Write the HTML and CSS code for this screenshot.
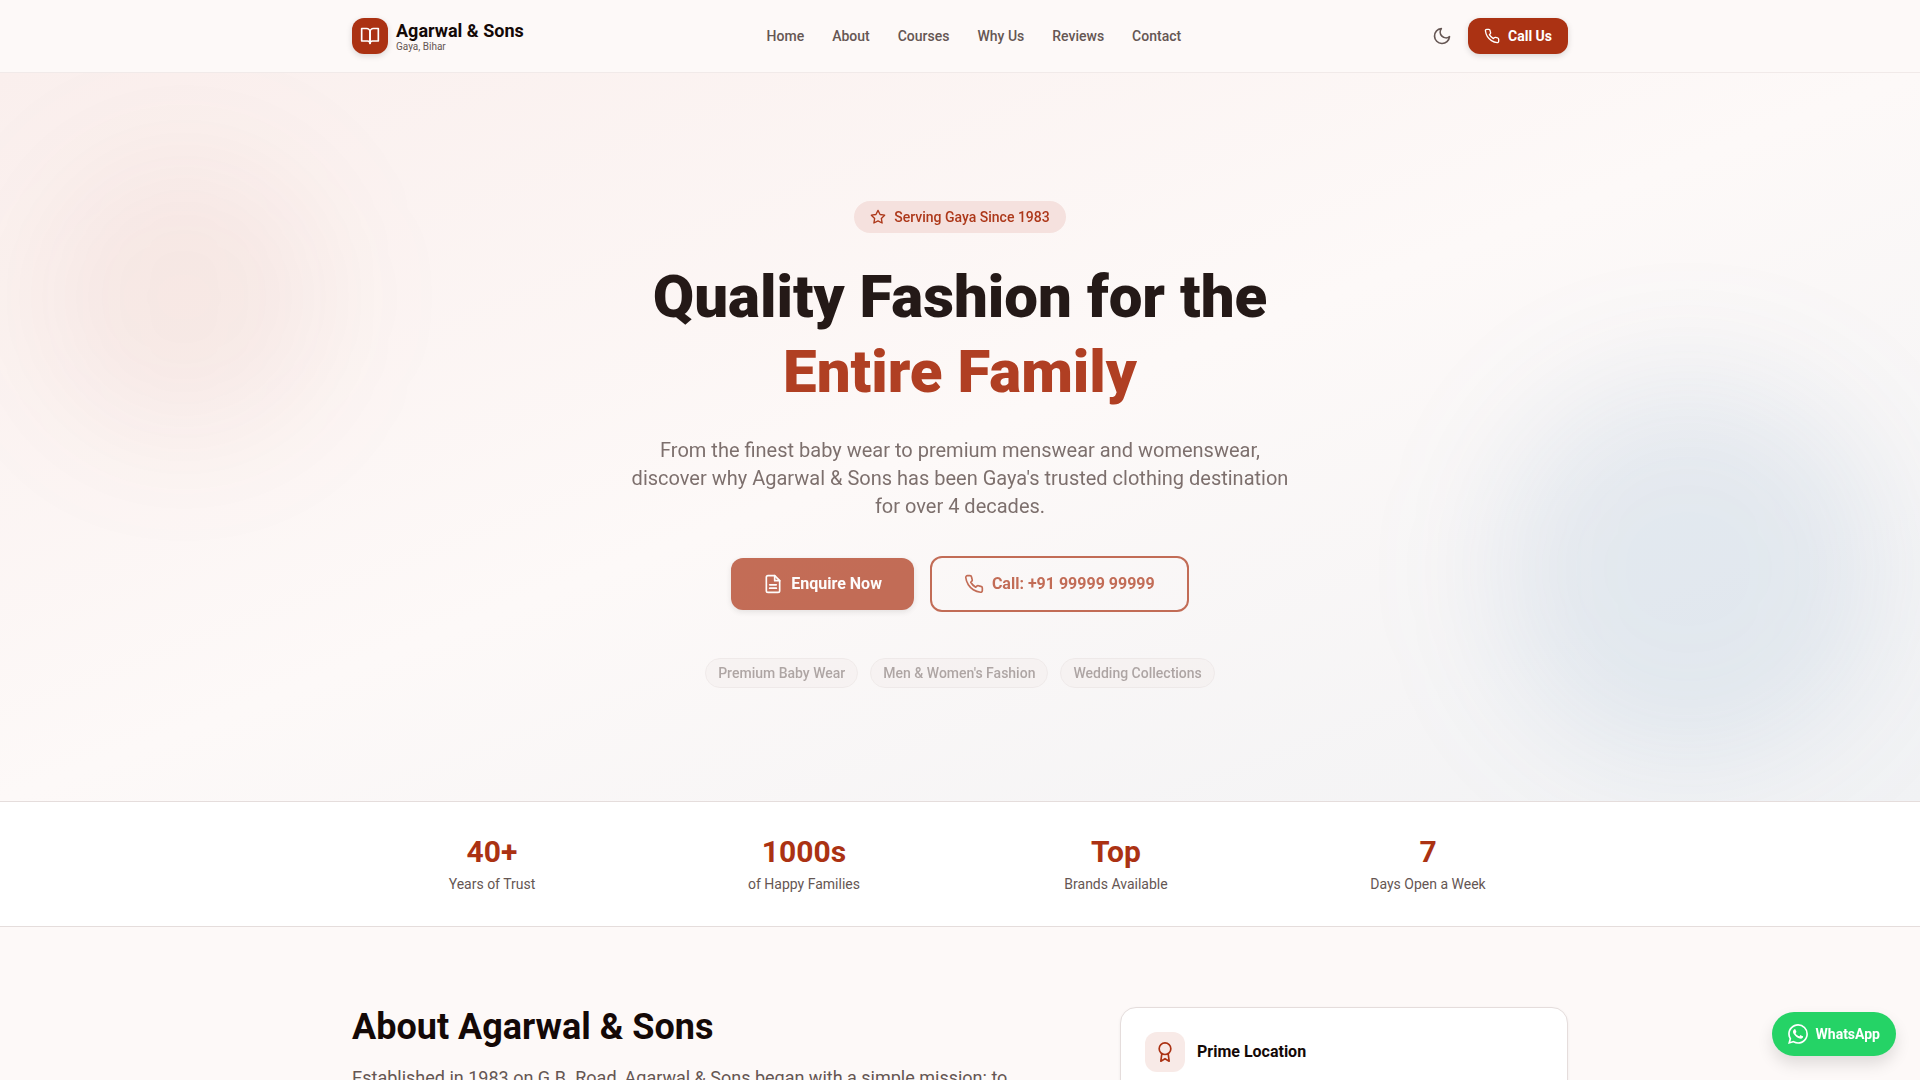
FILE: index.html
```html
<!DOCTYPE html>
<html lang="en">
<head>
    <meta charset="UTF-8">
    <meta name="viewport" content="width=device-width, initial-scale=1.0">
    <title>Agarwal &amp; Sons</title>
    <link rel="stylesheet" href="styles.css">
</head>
<body>
    <header class="header">
        <div class="container header-inner">
            <a href="#" class="brand">
                <span class="brand-logo">
                    <svg class="icon" width="20" height="20" viewBox="0 0 24 24"><path d="M2 3h6a4 4 0 0 1 4 4v14a3 3 0 0 0-3-3H2z"/><path d="M22 3h-6a4 4 0 0 0-4 4v14a3 3 0 0 1 3-3h7z"/></svg>
                </span>
                <span class="brand-text">
                    <span class="brand-name">Agarwal &amp; Sons</span>
                    <span class="brand-place">Gaya, Bihar</span>
                </span>
            </a>
            <nav class="nav">
                <a href="#home">Home</a>
                <a href="#about">About</a>
                <a href="#courses">Courses</a>
                <a href="#why-us">Why Us</a>
                <a href="#reviews">Reviews</a>
                <a href="#contact">Contact</a>
            </nav>
            <div class="header-actions">
                <button type="button" class="theme-toggle">
                    <svg class="icon" width="20" height="20" viewBox="0 0 24 24"><path d="M21 12.79A9 9 0 1 1 11.21 3 7 7 0 0 0 21 12.79z"/></svg>
                </button>
                <a href="tel:+919999999999" class="btn btn-small">
                    <svg class="icon" width="16" height="16" viewBox="0 0 24 24"><path d="M22 16.92v3a2 2 0 0 1-2.18 2 19.79 19.79 0 0 1-8.63-3.07 19.5 19.5 0 0 1-6-6 19.79 19.79 0 0 1-3.07-8.67A2 2 0 0 1 4.11 2h3a2 2 0 0 1 2 1.72 12.84 12.84 0 0 0 .7 2.81 2 2 0 0 1-.45 2.11L8.09 9.91a16 16 0 0 0 6 6l1.27-1.27a2 2 0 0 1 2.11-.45 12.84 12.84 0 0 0 2.81.7A2 2 0 0 1 22 16.92z"/></svg>
                    Call Us
                </a>
            </div>
        </div>
    </header>

    <main>
        <section class="hero" id="home">
            <div class="blob blob-left"></div>
            <div class="blob blob-right"></div>
            <div class="hero-content">
                <div class="hero-badge">
                    <svg class="icon" width="16" height="16" viewBox="0 0 24 24"><polygon points="12 2 15.09 8.26 22 9.27 17 14.14 18.18 21.02 12 17.77 5.82 21.02 7 14.14 2 9.27 8.91 8.26 12 2"/></svg>
                    Serving Gaya Since 1983
                </div>
                <h1 class="hero-title">Quality Fashion for the <span>Entire Family</span></h1>
                <p class="hero-lead">From the finest baby wear to premium menswear and womenswear, discover why Agarwal &amp; Sons has been Gaya's trusted clothing destination for over 4 decades.</p>
                <div class="hero-buttons">
                    <a href="#contact" class="btn">
                        <svg class="icon" width="20" height="20" viewBox="0 0 24 24"><path d="M14 2H6a2 2 0 0 0-2 2v16a2 2 0 0 0 2 2h12a2 2 0 0 0 2-2V8z"/><polyline points="14 2 14 8 20 8"/><line x1="16" y1="13" x2="8" y2="13"/><line x1="16" y1="17" x2="8" y2="17"/></svg>
                        Enquire Now
                    </a>
                    <a href="tel:+919999999999" class="btn btn-outline">
                        <svg class="icon" width="20" height="20" viewBox="0 0 24 24"><path d="M22 16.92v3a2 2 0 0 1-2.18 2 19.79 19.79 0 0 1-8.63-3.07 19.5 19.5 0 0 1-6-6 19.79 19.79 0 0 1-3.07-8.67A2 2 0 0 1 4.11 2h3a2 2 0 0 1 2 1.72 12.84 12.84 0 0 0 .7 2.81 2 2 0 0 1-.45 2.11L8.09 9.91a16 16 0 0 0 6 6l1.27-1.27a2 2 0 0 1 2.11-.45 12.84 12.84 0 0 0 2.81.7A2 2 0 0 1 22 16.92z"/></svg>
                        Call: +91 99999 99999
                    </a>
                </div>
                <ul class="hero-tags">
                    <li>Premium Baby Wear</li>
                    <li>Men &amp; Women's Fashion</li>
                    <li>Wedding Collections</li>
                </ul>
            </div>
        </section>

        <section class="stats">
            <div class="container stats-grid">
                <div class="stat">
                    <div class="stat-value">40+</div>
                    <div class="stat-label">Years of Trust</div>
                </div>
                <div class="stat">
                    <div class="stat-value">1000s</div>
                    <div class="stat-label">of Happy Families</div>
                </div>
                <div class="stat">
                    <div class="stat-value">Top</div>
                    <div class="stat-label">Brands Available</div>
                </div>
                <div class="stat">
                    <div class="stat-value">7</div>
                    <div class="stat-label">Days Open a Week</div>
                </div>
            </div>
        </section>

        <section class="about" id="about">
            <div class="container about-grid">
                <div class="about-text">
                    <h2>About Agarwal &amp; Sons</h2>
                    <p>Established in 1983 on G.B. Road, Agarwal &amp; Sons began with a simple mission: to</p>
                </div>
                <div class="about-card">
                    <div class="feature">
                        <span class="feature-icon">
                            <svg class="icon" width="20" height="20" viewBox="0 0 24 24"><circle cx="12" cy="8" r="7"/><polyline points="8.21 13.89 7 23 12 20 17 23 15.79 13.88"/></svg>
                        </span>
                        <h3>Prime Location</h3>
                    </div>
                </div>
            </div>
        </section>
    </main>

    <a href="https://wa.me/919999999999" class="whatsapp">
        <svg width="20" height="20" viewBox="0 0 24 24" fill="currentColor"><path d="M17.472 14.382c-.297-.149-1.758-.867-2.03-.967-.273-.099-.471-.148-.67.15-.197.297-.767.966-.94 1.164-.173.199-.347.223-.644.075-.297-.15-1.255-.463-2.39-1.475-.883-.788-1.48-1.761-1.653-2.059-.173-.297-.018-.458.13-.606.134-.133.298-.347.446-.52.149-.174.198-.298.298-.497.099-.198.05-.371-.025-.52-.075-.149-.669-1.612-.916-2.207-.242-.579-.487-.5-.669-.51-.173-.008-.371-.01-.57-.01-.198 0-.52.074-.792.372-.272.297-1.04 1.016-1.04 2.479 0 1.462 1.065 2.875 1.213 3.074.149.198 2.096 3.2 5.077 4.487.709.306 1.262.489 1.694.625.712.227 1.36.195 1.871.118.571-.085 1.758-.719 2.006-1.413.248-.694.248-1.289.173-1.413-.074-.124-.272-.198-.57-.347m-5.421 7.403h-.004a9.87 9.87 0 0 1-5.031-1.378l-.361-.214-3.741.982.998-3.648-.235-.374a9.86 9.86 0 0 1-1.51-5.26c.001-5.45 4.436-9.884 9.888-9.884 2.64 0 5.122 1.03 6.988 2.898a9.825 9.825 0 0 1 2.893 6.994c-.003 5.45-4.437 9.884-9.885 9.884m8.413-18.297A11.815 11.815 0 0 0 12.05 0C5.495 0 .16 5.335.157 11.892c0 2.096.547 4.142 1.588 5.945L.057 24l6.305-1.654a11.882 11.882 0 0 0 5.683 1.448h.005c6.554 0 11.89-5.335 11.893-11.893a11.821 11.821 0 0 0-3.48-8.413z"/></svg>
        WhatsApp
    </a>
</body>
</html>
```
FILE: styles.css
```css
:root {
    --primary: #ab3213;
    --bg: #fdf9f8;
    --text: #140907;
    --muted: #655653;
    --border: #e5dddc;
}

* {
    box-sizing: border-box;
    margin: 0;
    padding: 0;
}

body {
    font-family: Roboto, sans-serif;
    font-size: 16px;
    line-height: 24px;
    color: var(--text);
    background-color: var(--bg);
}

a {
    color: inherit;
    text-decoration: none;
}

.container {
    max-width: 1280px;
    margin: 0 auto;
    padding: 0 32px;
}

.icon {
    flex-shrink: 0;
    fill: none;
    stroke: currentColor;
    stroke-width: 2;
    stroke-linecap: round;
    stroke-linejoin: round;
}

/* Header */
.header {
    border-bottom: 1px solid #f1eae9;
}

.header-inner {
    display: flex;
    align-items: center;
    justify-content: space-between;
    height: 72px;
}

.brand,
.header-actions {
    display: flex;
    align-items: center;
    gap: 8px;
}

.brand-logo {
    display: flex;
    align-items: center;
    justify-content: center;
    width: 36px;
    height: 36px;
    border-radius: 12px;
    color: white;
    background-color: var(--primary);
    box-shadow: 0 2px 6px rgba(0, 0, 0, 0.14);
}

.brand-text {
    display: flex;
    flex-direction: column;
    padding-top: 2px;
}

.brand-name {
    font-size: 18px;
    font-weight: 700;
    line-height: 20px;
}

.brand-place {
    font-size: 10px;
    line-height: 12px;
    color: var(--muted);
}

.nav {
    display: flex;
    gap: 28px;
    font-size: 14px;
    font-weight: 500;
    line-height: 20px;
    color: var(--muted);
}

.theme-toggle {
    display: flex;
    padding: 8px;
    border: none;
    color: var(--muted);
    background: none;
    cursor: pointer;
}

.btn {
    display: inline-flex;
    align-items: center;
    gap: 8px;
    padding: 14px 32px;
    border-radius: 12px;
    font-weight: 700;
    color: white;
    background-color: var(--primary);
    box-shadow: 0 2px 6px rgba(0, 0, 0, 0.14);
}

.btn-small {
    padding: 8px 16px;
    font-size: 14px;
    line-height: 20px;
}

.btn-outline {
    border: 2px solid var(--primary);
    color: var(--primary);
    background: none;
    box-shadow: none;
}

/* Hero */
.hero {
    position: relative;
    overflow: hidden;
    padding: 128px 32px 113px;
    background: linear-gradient(to bottom right, #faefed, var(--bg) 50%, #f1f2f4);
}

.blob {
    position: absolute;
    border-radius: 50%;
    filter: blur(64px);
}

.blob-left {
    top: 80px;
    left: 40px;
    width: 288px;
    height: 288px;
    background-color: rgba(171, 50, 19, 0.06);
}

.blob-right {
    right: 40px;
    bottom: 40px;
    width: 384px;
    height: 384px;
    background-color: rgba(50, 120, 180, 0.1);
}

.hero-content {
    position: relative;
    display: flex;
    flex-direction: column;
    align-items: center;
    max-width: 768px;
    margin: 0 auto;
    text-align: center;
}

.hero-badge {
    display: flex;
    align-items: center;
    gap: 8px;
    padding: 6px 16px;
    border-radius: 16px;
    font-size: 14px;
    font-weight: 500;
    line-height: 20px;
    color: var(--primary);
    background-color: #f5e1de;
    opacity: 0.97;
}

.hero-title {
    margin-top: 26px;
    font-size: 60px;
    font-weight: 900;
    line-height: 75px;
    opacity: 0.93;
}

.hero-title span {
    display: block;
    color: var(--primary);
}

.hero-lead {
    max-width: 672px;
    margin-top: 27px;
    font-size: 20px;
    line-height: 28px;
    color: var(--muted);
    opacity: 0.84;
}

.hero-buttons {
    display: flex;
    align-items: center;
    gap: 16px;
    margin-top: 36px;
    opacity: 0.7;
}

.hero-tags {
    display: flex;
    gap: 12px;
    margin-top: 46px;
    list-style: none;
    opacity: 0.5;
}

.hero-tags li {
    padding: 4px 12px;
    border: 1px solid var(--border);
    border-radius: 15px;
    font-size: 14px;
    font-weight: 500;
    line-height: 20px;
    color: var(--muted);
    background-color: #f5efee;
}

/* Stats */
.stats {
    padding: 32px 0;
    border-top: 1px solid var(--border);
    border-bottom: 1px solid var(--border);
    background-color: white;
}

.stats-grid {
    display: grid;
    grid-template-columns: repeat(4, 1fr);
    gap: 32px;
    text-align: center;
}

.stat-value {
    font-size: 30px;
    font-weight: 700;
    line-height: 36px;
    color: var(--primary);
}

.stat-label {
    margin-top: 4px;
    font-size: 14px;
    line-height: 20px;
    color: var(--muted);
}

/* About */
.about {
    padding: 80px 0;
}

.about-grid {
    display: grid;
    grid-template-columns: 704fr 448fr;
    gap: 64px;
}

.about-text h2 {
    font-size: 36px;
    font-weight: 700;
    line-height: 40px;
}

.about-text p {
    margin-top: 16px;
    font-size: 18px;
    line-height: 29px;
    color: var(--muted);
}

.about-card {
    padding: 24px;
    border: 1px solid var(--border);
    border-radius: 16px;
    background-color: white;
    box-shadow: 0 1px 3px rgba(0, 0, 0, 0.06);
}

.feature {
    display: flex;
    align-items: center;
    gap: 12px;
}

.feature-icon {
    display: flex;
    align-items: center;
    justify-content: center;
    width: 40px;
    height: 40px;
    border-radius: 12px;
    color: var(--primary);
    background-color: #f8eae7;
}

.feature h3 {
    font-size: 16px;
    font-weight: 700;
    line-height: 24px;
}

/* Floating chat button */
.whatsapp {
    position: fixed;
    right: 24px;
    bottom: 24px;
    display: flex;
    align-items: center;
    gap: 8px;
    padding: 12px 16px;
    border-radius: 22px;
    font-size: 14px;
    font-weight: 700;
    line-height: 20px;
    color: white;
    background-color: #25d366;
    box-shadow: 0 8px 16px rgba(0, 0, 0, 0.12);
}
```
